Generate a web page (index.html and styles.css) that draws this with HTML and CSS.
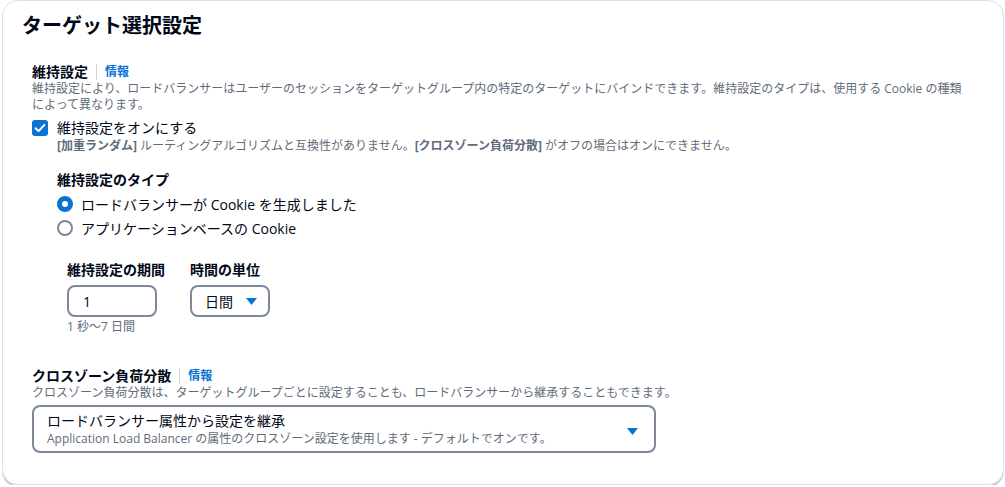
FILE: index.html
```html
<!DOCTYPE html>
<html lang="ja">
<head>
<meta charset="utf-8">
<link rel="stylesheet" href="styles.css">
</head>
<body>
<div class="card">
  <h2 class="title">ターゲット選択設定</h2>
  <div class="content">
    <div class="field-head"><span class="label">維持設定</span><span class="sep"></span><a class="info">情報</a></div>
    <div class="desc">維持設定により、ロードバランサーはユーザーのセッションをターゲットグループ内の特定のターゲットにバインドできます。維持設定のタイプは、使用する Cookie の種類によって異なります。</div>

    <div class="check-row">
      <span class="checkbox"><svg width="16" height="16" viewBox="0 0 16 16"><rect x="0" y="0" width="16" height="16" rx="3" fill="#0972d3"/><path d="M3.6 8.2 L6.6 11.1 L12.4 4.9" fill="none" stroke="#fff" stroke-width="2" stroke-linecap="round" stroke-linejoin="round"/></svg></span>
      <div class="check-text">
        <div class="check-label">維持設定をオンにする</div>
        <div class="desc"><b>[加重ランダム]</b> ルーティングアルゴリズムと互換性がありません。<b>[クロスゾーン負荷分散]</b> がオフの場合はオンにできません。</div>
      </div>
    </div>

    <div class="sub">
      <div class="sub-label">維持設定のタイプ</div>
      <div class="radio-row first"><span class="radio on"></span><span>ロードバランサーが Cookie を生成しました</span></div>
      <div class="radio-row"><span class="radio"></span><span>アプリケーションベースの Cookie</span></div>

      <div class="duration">
        <div class="col col-1">
          <div class="sub-label">維持設定の期間</div>
          <div class="input">1</div>
          <div class="constraint">1 秒〜7 日間</div>
        </div>
        <div class="col">
          <div class="sub-label">時間の単位</div>
          <div class="select-sm"><span>日間</span><svg class="caret" width="11" height="7" viewBox="0 0 11 7"><path d="M0 0 H11 L5.5 7 Z" fill="#0972d3"/></svg></div>
        </div>
      </div>
    </div>

    <div class="field-head cz"><span class="label">クロスゾーン負荷分散</span><span class="sep"></span><a class="info">情報</a></div>
    <div class="desc">クロスゾーン負荷分散は、ターゲットグループごとに設定することも、ロードバランサーから継承することもできます。</div>
    <div class="select-lg">
      <div class="select-text">
        <div class="sel-main">ロードバランサー属性から設定を継承</div>
        <div class="sel-sub">Application Load Balancer の属性のクロスゾーン設定を使用します - デフォルトでオンです。</div>
      </div>
      <svg class="caret" width="11" height="7" viewBox="0 0 11 7"><path d="M0 0 H11 L5.5 7 Z" fill="#0972d3"/></svg>
    </div>
  </div>
</div>
</body>
</html>
```

FILE: styles.css
```css
html, body {
  margin: 0;
  padding: 0;
  background: #ffffff;
}
body {
  font-family: "Open Sans", "Noto Sans CJK JP", sans-serif;
  color: #000716;
  font-size: 14px;
}
.card {
  box-sizing: border-box;
  margin: 0 1px 0 2px;
  height: 485px;
  border: 1px solid #dedee3;
  border-radius: 16px;
  box-shadow: 0 2px 0 #c6c6cd;
  padding: 13px 36px 0 19px;
}
.title {
  margin: 0;
  font-size: 20px;
  line-height: 24px;
  font-weight: 700;
  color: #000716;
}
.content {
  margin-left: 10px;
  margin-top: 25px;
}
.field-head {
  display: flex;
  align-items: center;
  height: 18px;
  line-height: 18px;
}
.label {
  font-weight: 700;
  font-size: 14px;
}
.sep {
  width: 1px;
  height: 16px;
  background: #d1d5db;
  margin: 0 8px;
}
.info {
  color: #0972d3;
  font-weight: 700;
  font-size: 12px;
}
.desc {
  font-size: 12px;
  line-height: 16px;
  color: #5f6b7a;
}
.desc b {
  font-weight: 700;
}
.check-row {
  display: flex;
  margin-top: 5px;
}
.checkbox {
  margin-top: 2px;
  width: 16px;
  height: 16px;
  flex: none;
  display: block;
}
.checkbox svg {
  display: block;
}
.check-text {
  margin-left: 9px;
}
.check-label {
  font-size: 14px;
  line-height: 20px;
}
.sub {
  margin-left: 25px;
  margin-top: 15px;
}
.sub-label {
  font-weight: 700;
  font-size: 14px;
  line-height: 22px;
}
.radio-row {
  display: flex;
  align-items: center;
  height: 22px;
  margin-top: 2px;
  font-size: 14px;
}
.radio {
  box-sizing: border-box;
  width: 16px;
  height: 16px;
  border-radius: 50%;
  border: 2px solid #7d8998;
  background: #fff;
  margin-right: 8px;
  flex: none;
}
.radio.on {
  border: 5px solid #0972d3;
}
.duration {
  display: flex;
  gap: 16px;
  margin-left: 10px;
  margin-top: 20px;
}
.col-1 {
  width: 107px;
}
.input, .select-sm {
  box-sizing: border-box;
  margin-top: 4px;
  height: 32px;
  border: 2px solid #7d8998;
  border-radius: 8px;
  display: flex;
  align-items: center;
  font-size: 14px;
}
.input {
  width: 90px;
  padding-left: 14px;
}
.select-sm {
  width: 80px;
  padding-left: 13px;
}
.select-sm .caret {
  margin-left: 13px;
}
.constraint {
  margin-top: 2px;
  font-size: 12px;
  line-height: 16px;
  color: #5f6b7a;
}
.cz {
  margin-top: 32px;
}
.select-lg {
  box-sizing: border-box;
  margin-top: 4px;
  width: 624px;
  height: 48px;
  border: 2px solid #7d8998;
  border-radius: 8px;
  padding: 4px 16px 0 13px;
  display: flex;
  align-items: flex-start;
  justify-content: space-between;
}
.select-lg .caret {
  margin-top: 17px;
}
.sel-main {
  font-size: 14px;
  line-height: 20px;
}
.sel-sub {
  font-size: 12px;
  line-height: 16px;
  color: #5f6b7a;
}
```
